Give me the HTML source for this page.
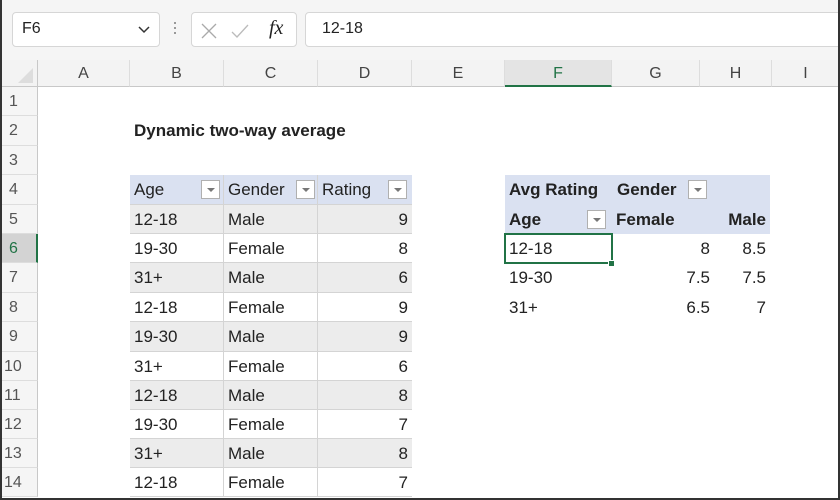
<!DOCTYPE html><html><head><style>
*{margin:0;padding:0;box-sizing:border-box}
body{width:840px;height:500px;background:#fff;font-family:"Liberation Sans",sans-serif;position:relative;overflow:hidden;color:#222}
.a{position:absolute}
.box{position:absolute;border:1px solid #d6d6d6;border-radius:4px;background:#fff;top:12px;height:35px}
.ch{position:absolute;top:60px;height:27px;background:#f3f3f3;border-right:1px solid #ddd;border-bottom:1px solid #c8c8c8;text-align:center;font-size:16px;line-height:27px;color:#444}
.rh{position:absolute;left:0;width:38px;background:#f5f5f5;border-bottom:1px solid #ddd;border-right:1px solid #c8c8c8;font-size:16px;color:#555;padding-left:9px}
.c{position:absolute;font-size:17px;white-space:nowrap;line-height:29px;padding:0 4px;border-bottom:1px solid #d4d4d4}
.g{background:#ececec}
.h{background:#dae1f1}
.dd{position:absolute;width:19px;height:19px;border:1px solid #b0b0b0;background:#fff}
.dd:after{content:"";position:absolute;left:5px;top:7px;border-left:4px solid transparent;border-right:4px solid transparent;border-top:4px solid #777}
</style></head><body>
<div class="a" style="left:0;top:0;width:840px;height:60px;background:#f5f5f5"></div>
<div class="box" style="left:12px;width:148px"><span class="a" style="left:9px;top:7px;font-size:16px">F6</span>
<svg class="a" style="left:125px;top:12px" width="12" height="10"><path d="M1 2l5 5 5-5" stroke="#333" stroke-width="1.5" fill="none"/></svg></div>
<div class="a" style="left:174px;top:22px;width:2px;height:2px;background:#999;box-shadow:0 5px #999,0 10px #999"></div>
<div class="box" style="left:191px;width:106px">
<svg class="a" style="left:8px;top:9px" width="18" height="18"><path d="M2 2l14 14M16 2L2 16" stroke="#aaa" stroke-width="1.3"/></svg>
<svg class="a" style="left:38px;top:9px" width="20" height="18"><path d="M2 10l5 5L18 3" stroke="#bbb" stroke-width="1.3" fill="none"/></svg>
<span class="a" style="left:77px;top:4px;font-family:'Liberation Serif',serif;font-style:italic;font-size:20px">fx</span></div>
<div class="box" style="left:305px;width:560px"><span class="a" style="left:16px;top:7px;font-size:16px">12-18</span></div>
<div class="a" style="left:0;top:60px;width:38px;height:27px;background:#f3f3f3;border-right:1px solid #c8c8c8;border-bottom:1px solid #c8c8c8"></div>
<svg class="a" style="left:16px;top:66px" width="18" height="18"><path d="M17 2V17H2z" fill="#ddd"/></svg>
<div class="ch" style="left:38px;width:92px">A</div>
<div class="ch" style="left:130px;width:94px">B</div>
<div class="ch" style="left:224px;width:94px">C</div>
<div class="ch" style="left:318px;width:94px">D</div>
<div class="ch" style="left:412px;width:93px">E</div>
<div class="ch" style="left:505px;width:107px;background:#e4e4e4;border-bottom:2px solid #217346;color:#217346">F</div>
<div class="ch" style="left:612px;width:88px">G</div>
<div class="ch" style="left:700px;width:72px">H</div>
<div class="ch" style="left:772px;width:68px">I</div>

<div class="rh" style="top:87px;height:29px;line-height:29px">1</div>
<div class="rh" style="top:116px;height:30px;line-height:30px">2</div>
<div class="rh" style="top:146px;height:29px;line-height:29px">3</div>
<div class="rh" style="top:175px;height:30px;line-height:30px">4</div>
<div class="rh" style="top:205px;height:29px;line-height:29px">5</div>
<div class="rh" style="top:234px;height:29px;line-height:29px;background:#d3d3d3;color:#217346;border-right:2px solid #217346">6</div>
<div class="rh" style="top:263px;height:30px;line-height:30px">7</div>
<div class="rh" style="top:293px;height:29px;line-height:29px">8</div>
<div class="rh" style="top:322px;height:30px;line-height:30px">9</div>
<div class="rh" style="top:352px;height:29px;line-height:29px;padding-left:4px">10</div>
<div class="rh" style="top:381px;height:29px;line-height:29px;padding-left:4px">11</div>
<div class="rh" style="top:410px;height:29px;line-height:29px;padding-left:4px">12</div>
<div class="rh" style="top:439px;height:29px;line-height:29px;padding-left:4px">13</div>
<div class="rh" style="top:468px;height:29px;line-height:29px;padding-left:4px">14</div>

<div class="a" style="left:134px;top:121px;font-size:17px;font-weight:bold">Dynamic two-way average</div>

<div id="t"></div>
<script>
var rows=[["Age","Gender","Rating"],["12-18","Male","9"],["19-30","Female","8"],["31+","Male","6"],["12-18","Female","9"],["19-30","Male","9"],["31+","Female","6"],["12-18","Male","8"],["19-30","Female","7"],["31+","Male","8"],["12-18","Female","7"]];
var tops=[175,205,234,263,293,322,352,381,410,439,468],h="";
rows.forEach(function(r,i){var t=tops[i],hh=(tops[i+1]||497)-t,cls=i==0?"h":(i%2?"g":"");
h+='<div class="c '+cls+'" style="left:130px;width:94px;top:'+t+'px;height:'+hh+'px;border-right:1px solid #d4d4d4">'+r[0]+'</div>';
h+='<div class="c '+cls+'" style="left:224px;width:94px;top:'+t+'px;height:'+hh+'px;border-right:1px solid #d4d4d4;overflow:hidden">'+r[1]+'</div>';
h+='<div class="c '+cls+'" style="left:318px;width:94px;top:'+t+'px;height:'+hh+'px;text-align:'+(i?'right':'left')+'">'+r[2]+'</div>';});
document.getElementById("t").innerHTML=h;
</script>
<div class="dd" style="left:201px;top:180px"></div>
<div class="dd" style="left:296px;top:180px"></div>
<div class="dd" style="left:388px;top:180px"></div>

<div class="a h" style="left:505px;top:175px;width:265px;height:59px"></div>
<div class="c" style="left:505px;top:175px;border:0;font-weight:bold">Avg Rating</div>
<div class="c" style="left:613px;top:175px;border:0;font-weight:bold">Gender</div>
<div class="dd" style="left:688px;top:180px"></div>
<div class="c" style="left:505px;top:205px;border:0;font-weight:bold">Age</div>
<div class="dd" style="left:587px;top:210px"></div>
<div class="c" style="left:612px;top:205px;border:0;font-weight:bold">Female</div>
<div class="c" style="left:700px;top:205px;width:70px;text-align:right;border:0;font-weight:bold">Male</div>
<div class="c" style="left:505px;top:234px;border:0">12-18</div>
<div class="c" style="left:612px;top:234px;width:102px;text-align:right;border:0">8</div>
<div class="c" style="left:700px;top:234px;width:70px;text-align:right;border:0">8.5</div>
<div class="c" style="left:505px;top:263px;border:0">19-30</div>
<div class="c" style="left:612px;top:263px;width:102px;text-align:right;border:0">7.5</div>
<div class="c" style="left:700px;top:263px;width:70px;text-align:right;border:0">7.5</div>
<div class="c" style="left:505px;top:293px;border:0">31+</div>
<div class="c" style="left:612px;top:293px;width:102px;text-align:right;border:0">6.5</div>
<div class="c" style="left:700px;top:293px;width:70px;text-align:right;border:0">7</div>
<div class="a" style="left:504px;top:233px;width:109px;height:31px;border:2px solid #217346"></div>
<div class="a" style="left:608px;top:260px;width:7px;height:7px;background:#217346;border:1px solid #fff"></div>
<div class="a" style="left:0;top:0;width:840px;height:500px;border:2px solid #333;border-top:0"></div>
</body></html>
